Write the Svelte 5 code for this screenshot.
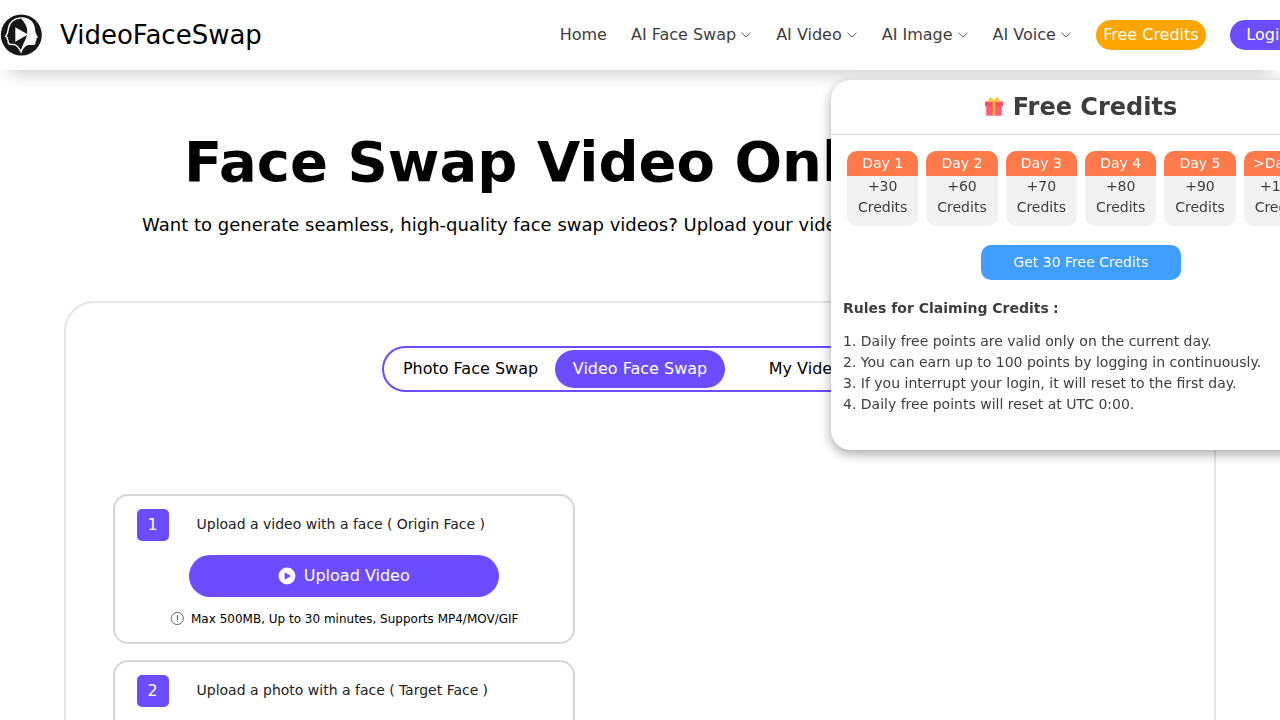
<script>
  const menus = ['AI Face Swap', 'AI Video', 'AI Image', 'AI Voice'];
  const days = [
    ['Day 1', '+30'],
    ['Day 2', '+60'],
    ['Day 3', '+70'],
    ['Day 4', '+80'],
    ['Day 5', '+90'],
    ['>Day 5', '+100']
  ];
  const rules = [
    '1. Daily free points are valid only on the current day.',
    '2. You can earn up to 100 points by logging in continuously.',
    '3. If you interrupt your login, it will reset to the first day.',
    '4. Daily free points will reset at UTC 0:00.'
  ];
</script>

<div class="page">
  <header>
    <div class="brand">
      <svg class="logo" width="42" height="42" viewBox="0 0 42 42">
        <circle cx="21.300" cy="21" r="20.500" fill="#161616" />
        <path d="M20.500 4C14 4.500 9.500 8.500 8.500 14C7.800 17 8 18 7 20L5.700 22.500L7.500 23.500L7.200 25L8 26.500L8.400 29.500C9.500 30.800 12 30.300 14.500 30.600C17.500 31.200 19 34 21 38C22.500 34 23 32 25 31" fill="none" stroke="#fff" stroke-width="1.400" />
        <path d="M20 3.200C28 2.500 34 7 35 14C35.200 17 35.400 18.500 36.400 20.500L38 23.500L36.300 24.400L36.600 26L35.600 27.500L35.400 30C34.500 31.500 32 31 29.500 30.900C26 30.600 23.500 34 21 38.500C21.500 34 23 30.500 25 26.500C28 21 28.200 14 24.500 9C23 6.500 21.500 5 20 3.200Z" fill="#fff" />
        <path d="M15.300 13.300V27.700L28 20.500Z" fill="#fff" />
      </svg>
      <span>VideoFaceSwap</span>
    </div>
    <nav>
      <span class="label">Home</span>
      {#each menus as item}
        <span class="menu"><span class="label">{item}</span>
          <svg width="10" height="6" viewBox="0 0 10 6"><path d="M.5 .7L5 5L9.500 .7" fill="none" stroke="#555" stroke-width=".9" /></svg>
        </span>
      {/each}
      <button class="free">Free Credits</button>
      <button class="login">Login</button>
    </nav>
  </header>

  <aside class="panel">
    <div class="panel-title">
      <svg class="gift" width="18" height="19" viewBox="0 0 18 19">
        <rect x="1.200" y="9" width="15.600" height="9.700" fill="#ff5b74" />
        <rect x="0" y="4.500" width="18" height="4.700" rx=".4" fill="#ff4e5c" />
        <path d="M3.200 4.500C2.400 3.700 3.200 2.900 4 2.700C3.800 1 4.800 .2 6.200 .5C7.500 .8 8.300 2.400 9 3.500C9.700 2.400 10.500 .8 11.800 .5C13.200 .2 14.200 1 14 2.700C15 3 15.600 3.700 14.800 4.500Z" fill="#ffc33c" />
        <rect x="7.700" y="4" width="2.600" height="14.700" fill="#ffb52e" />
      </svg>
      <h2>Free Credits</h2>
    </div>
    <div class="days">
      {#each days as [day, amount]}
        <div class="day">
          <div class="day-name">{day}</div>
          <div class="amount">{amount}<br />Credits</div>
        </div>
      {/each}
    </div>
    <button class="claim">Get 30 Free Credits</button>
    <div class="rules">
      <strong>Rules for Claiming Credits<span class="wide">:</span></strong>
      {#each rules as rule}<p>{rule}</p>{/each}
    </div>
  </aside>

  <main>
    <h1>Face Swap Video Online Free</h1>
    <p class="intro">Want to generate seamless, high-quality face swap videos? Upload your videos and swap now.</p>
    <section class="workspace">
      <div class="tabs">
        <span class="tab">Photo Face Swap</span>
        <span class="tab active">Video Face Swap</span>
        <span class="tab">My Videos</span>
      </div>
      <div class="steps">
        <div class="step">
          <div class="step-head"><span class="num">1</span><span class="step-text">Upload a video with a face<span class="wide">(</span>Origin Face<span class="wide">)</span></span></div>
          <button class="upload">
            <svg width="18" height="18" viewBox="0 0 18 18"><path fill="#fff" fill-rule="evenodd" d="M9 .6A8.400 8.400 0 1 1 9 17.400A8.400 8.400 0 0 1 9 .6ZM6.600 5.200V12.800L13 9Z" /></svg>
            <span class="label">Upload Video</span>
          </button>
          <div class="hint">
            <svg width="14" height="14" viewBox="0 0 14 14"><circle cx="7.300" cy="6.500" r="6.100" fill="none" stroke="#444" stroke-width=".8" /><path d="M7.400 3.200V8M7.400 9V9.900" stroke="#444" stroke-width=".9" /></svg>
            <span>Max 500MB, Up to 30 minutes, Supports MP4/MOV/GIF</span>
          </div>
        </div>
        <div class="step">
          <div class="step-head"><span class="num">2</span><span class="step-text">Upload a photo with a face<span class="wide">(</span>Target Face<span class="wide">)</span></span></div>
        </div>
      </div>
    </section>
  </main>
</div>

<style>
  :global(body) { margin: 0; overflow: hidden; background: #fff; }
  * { box-sizing: border-box; }
  .page {
    position: relative;
    width: 1280px;
    height: 720px;
    overflow: hidden;
    font-family: "DejaVu Sans", sans-serif;
    color: #000;
  }
  button { font: inherit; border: 0; padding: 0; color: #fff; }
  h1, h2, p { margin: 0; }
  svg { flex: none; display: block; }
  .label { padding-bottom: 2px; }
  .wide { display: inline-block; width: 14px; text-align: center; }

  header {
    position: relative;
    z-index: 2;
    height: 70px;
    display: flex;
    align-items: center;
    background: #fff;
    box-shadow: 0 13px 16px -9px rgba(0, 0, 0, .2);
  }
  .brand { display: flex; align-items: center; gap: 18px; width: 559.700px; flex: none; font-size: 26px; }
  nav { display: flex; align-items: center; gap: 24px; flex: none; font-size: 16px; color: #3d3d3d; white-space: nowrap; }
  .menu { display: flex; align-items: center; gap: 5px; padding-right: 1px; }
  .free, .login { height: 30px; padding-bottom: 2px; border-radius: 15px; flex: none; }
  .free { width: 110px; background: #ffa500; }
  .login { width: 76px; background: #6c4cff; }

  .panel {
    position: absolute;
    z-index: 3;
    left: 831px;
    top: 80px;
    width: 500px;
    height: 370px;
    border-radius: 20px;
    background: #fff;
    box-shadow: 0 4px 12px rgba(0, 0, 0, .35);
    clip-path: inset(-10px -30px -30px -30px);
    color: #3d3d3d;
    font-size: 14px;
    line-height: 21px;
    will-change: transform;
  }
  .panel-title {
    height: 55px;
    display: flex;
    align-items: center;
    justify-content: center;
    gap: 10px;
    border-bottom: 1px solid #d5d5d5;
  }
  .gift { margin-bottom: 2px; }
  h2 { font-size: 24px; line-height: 28px; }
  .days { display: grid; grid-template-columns: repeat(6, 1fr); gap: 8px; padding: 16px 16px 0; text-align: center; }
  .day { height: 75px; border-radius: 10px; overflow: hidden; background: #f2f2f2; }
  .day-name { height: 25px; line-height: 25px; background: #ff7a4a; color: #fff; white-space: nowrap; }
  .claim { display: block; width: 200px; height: 35px; margin: 19px auto 0; border-radius: 10px; background: #409eff; }
  .rules { padding: 18px 12px 0; white-space: nowrap; }
  .rules strong { display: block; height: 21px; margin-bottom: 12px; }

  h1 { margin-top: 59px; text-align: center; font-size: 56px; line-height: 66px; white-space: nowrap; }
  .intro { margin-top: 17px; padding-left: 142.100px; font-size: 18px; line-height: 26px; white-space: nowrap; }
  .workspace {
    width: 1152px;
    height: 900px;
    margin: 63px auto 0;
    border: 2px solid #e4e4e9;
    border-radius: 30px;
    padding: 43px 47px;
  }
  .tabs {
    width: 516px;
    height: 46px;
    margin: 0 auto;
    padding: 0 1px;
    display: flex;
    align-items: center;
    border: 2px solid #6c4cff;
    border-radius: 23px;
    font-size: 16px;
  }
  .tab { width: 170px; height: 38px; line-height: 37px; border-radius: 19px; text-align: center; }
  .tab:first-child { padding-left: 1px; }
  .tab:last-child { padding-right: 1px; }
  .active { background: #6c4cff; color: #fff; }
  .steps { width: 462px; margin-top: 102px; display: flex; flex-direction: column; gap: 16px; }
  .step { height: 150px; border: 2px solid #d5d5d5; border-radius: 15px; padding: 13px 22px; }
  .step-head { display: flex; align-items: center; gap: 27.500px; font-size: 14px; color: #222; }
  .step-text { line-height: 20px; padding-bottom: 2px; }
  .num { width: 32px; height: 32px; line-height: 31px; padding-right: 1px; border-radius: 5px; background: #6c4cff; color: #fff; font-size: 16px; text-align: center; }
  .upload {
    width: 310px;
    height: 42px;
    margin: 14px auto 0;
    display: flex;
    align-items: center;
    justify-content: center;
    gap: 7.500px;
    border-radius: 21px;
    background: #6c4cff;
    font-size: 16px;
  }
  .hint { margin-top: 13px; display: flex; align-items: center; justify-content: center; gap: 7.500px; font-size: 12px; line-height: 15px; }
  .hint span { padding-top: 2px; }
</style>
